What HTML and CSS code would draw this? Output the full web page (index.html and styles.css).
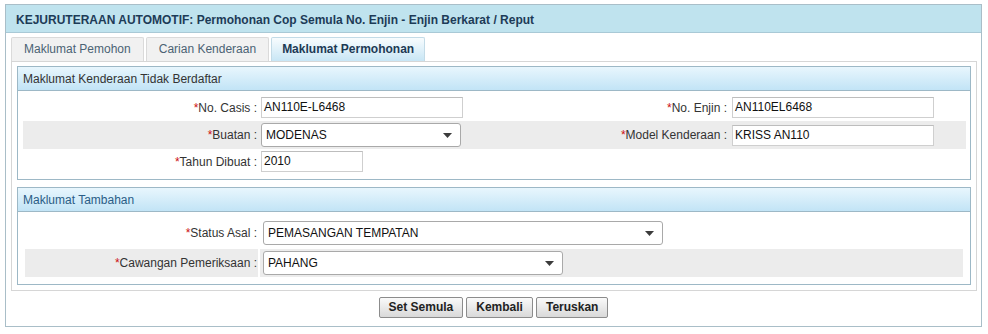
FILE: index.html
```html
<!DOCTYPE html>
<html lang="ms">
<head>
<meta charset="utf-8">
<title>Permohonan Cop Semula No. Enjin</title>
<link rel="stylesheet" href="styles.css">
</head>
<body>
<div class="win">
  <div class="win-title">KEJURUTERAAN AUTOMOTIF: Permohonan Cop Semula No. Enjin - Enjin Berkarat / Reput</div>
  <div class="win-body">
    <div class="tabs">
      <div class="tab">Maklumat Pemohon</div>
      <div class="tab">Carian Kenderaan</div>
      <div class="tab active">Maklumat Permohonan</div>
    </div>
    <div class="panel">
      <div class="section">
        <div class="sec-head">Maklumat Kenderaan Tidak Berdaftar</div>
        <div class="sec-body s1">
          <div class="row r1">
            <div class="lbl"><span class="req">*</span>No. Casis :</div>
            <div class="val"><div class="input w202">AN110E-L6468</div></div>
            <div class="lbl lbl2"><span class="req">*</span>No. Enjin :</div>
            <div class="val val2"><div class="input w202">AN110EL6468</div></div>
          </div>
          <div class="row r2 alt">
            <div class="lbl"><span class="req">*</span>Buatan :</div>
            <div class="val">
              <div class="select w200"><span>MODENAS</span><svg class="arrow" width="9" height="5" viewBox="0 0 9 5"><path d="M0 0H9L4.5 5Z" fill="#3c3c3c"/></svg></div>
            </div>
            <div class="lbl lbl2"><span class="req">*</span>Model Kenderaan :</div>
            <div class="val val2"><div class="input w202">KRISS AN110</div></div>
          </div>
          <div class="row r3">
            <div class="lbl"><span class="req">*</span>Tahun Dibuat :</div>
            <div class="val"><div class="input w102">2010</div></div>
          </div>
        </div>
      </div>
      <div class="section sec2">
        <div class="sec-head blue">Maklumat Tambahan</div>
        <div class="sec-body s2">
          <div class="row2 q1">
            <div class="lbl"><span class="req">*</span>Status Asal :</div>
            <div class="val3">
              <div class="select w400"><span>PEMASANGAN TEMPATAN</span><svg class="arrow" width="9" height="5" viewBox="0 0 9 5"><path d="M0 0H9L4.5 5Z" fill="#3c3c3c"/></svg></div>
            </div>
          </div>
          <div class="row2 q2 alt2">
            <div class="lbl"><span class="req">*</span>Cawangan Pemeriksaan :</div>
            <div class="val3">
              <div class="select w300"><span>PAHANG</span><svg class="arrow" width="9" height="5" viewBox="0 0 9 5"><path d="M0 0H9L4.5 5Z" fill="#3c3c3c"/></svg></div>
            </div>
          </div>
        </div>
      </div>
    </div>
    <div class="actions">
      <button class="btn" type="button">Set Semula</button>
      <button class="btn" type="button">Kembali</button>
      <button class="btn" type="button">Teruskan</button>
    </div>
  </div>
</div>
</body>
</html>
```

FILE: styles.css
```css
* { box-sizing: border-box; }

html, body {
  margin: 0;
  padding: 0;
  background: #ffffff;
}

body {
  font-family: "Liberation Sans", Arial, sans-serif;
  font-size: 12px;
  color: #333333;
}

.win {
  margin: 4px 0 0 5px;
  width: 977px;
  height: 323px;
  border: 1px solid #a9bec8;
  background: #ffffff;
}

.win-title {
  height: 28px;
  padding: 2px 0 0 10px;
  line-height: 26px;
  background: #bfe3ee;
  border-bottom: 1px solid #a9c9d6;
  font-weight: bold;
  color: #1d3b57;
  white-space: nowrap;
}

.win-body {
  padding: 4px 5px 8px 5px;
}

.tabs {
  display: flex;
  gap: 2px;
  height: 24px;
}

.tab {
  height: 24px;
  padding: 0 12px;
  line-height: 23px;
  background: #f1f1f1;
  border: 1px solid #dadada;
  border-bottom: none;
  border-radius: 2px 2px 0 0;
  color: #4b6374;
  white-space: nowrap;
}

.tab.active {
  padding: 0 10px;
  background: linear-gradient(#f8fcfe, #c8e6f5);
  border-color: #c3dbe7;
  font-weight: bold;
  color: #1d3a55;
}

.panel {
  width: 966px;
  height: 230px;
  border: 1px solid #d6d6d6;
  padding: 4px 5px 5px 5px;
}

.section {
  border: 1px solid #9db8c6;
}

.sec2 {
  margin-top: 7px;
}

.sec-head {
  height: 24px;
  padding-left: 5px;
  line-height: 24px;
  background: linear-gradient(#e8f6fd, #c2e4f6);
  border-bottom: 1px solid #9db8c6;
  color: #333333;
}

.sec-head.blue {
  color: #2a5d86;
}

.sec-body.s1 {
  padding: 3px 0 5px 0;
}

.sec-body.s2 {
  padding: 6px 0 7px 0;
}

.row {
  display: grid;
  grid-template-columns: 236px 231px 240px 235px;
  align-items: center;
  margin: 0 4px 0 5px;
}

.row.r1 { height: 27px; }
.row.r2 { height: 28px; }
.row.r3 { height: 25px; }

.row.alt {
  background: #ececec;
}

.lbl {
  text-align: right;
  padding-right: 2px;
  white-space: nowrap;
  color: #333333;
}

.lbl2 {
  padding-right: 3px;
}

.req {
  color: #cc1111;
}

.val {
  padding-left: 2px;
}

.val2 {
  padding-left: 2px;
}

.input {
  height: 21px;
  border: 1px solid #cfcfcf;
  border-top-color: #bdbdbd;
  background: #ffffff;
  padding-left: 2px;
  line-height: 19px;
  color: #111111;
  white-space: nowrap;
}

.w202 { width: 202px; }
.w102 { width: 102px; }
.w200 { width: 200px; }
.w300 { width: 300px; }
.w400 { width: 400px; }

.select {
  display: flex;
  align-items: center;
  justify-content: space-between;
  height: 24px;
  border: 1px solid #a9a9a9;
  border-radius: 3px;
  background: #ffffff;
  padding: 0 8px 0 4px;
  color: #111111;
  white-space: nowrap;
}

.arrow {
  display: block;
  flex: none;
}

.row2 {
  display: grid;
  grid-template-columns: 233px 703px;
  column-gap: 2px;
  align-items: stretch;
  margin: 0 7px;
}

.row2.q1 { height: 30px; }
.row2.q2 { height: 28px; margin-top: 1px; }

.row2 .lbl {
  display: flex;
  align-items: center;
  justify-content: flex-end;
  padding-right: 1px;
}

.val3 {
  display: flex;
  align-items: center;
  padding-left: 3px;
}

.row2.alt2 .lbl,
.row2.alt2 .val3 {
  background: #ececec;
}

.actions {
  display: flex;
  justify-content: center;
  gap: 3px;
  margin-top: 6px;
}

.btn {
  height: 21px;
  padding: 0 9px;
  border: 1px solid #8c8c8c;
  border-radius: 2px;
  background: linear-gradient(#fafafa, #d9d9d9);
  font-family: "Liberation Sans", Arial, sans-serif;
  font-size: 12px;
  font-weight: bold;
  color: #222222;
  line-height: 19px;
  cursor: pointer;
}
```
